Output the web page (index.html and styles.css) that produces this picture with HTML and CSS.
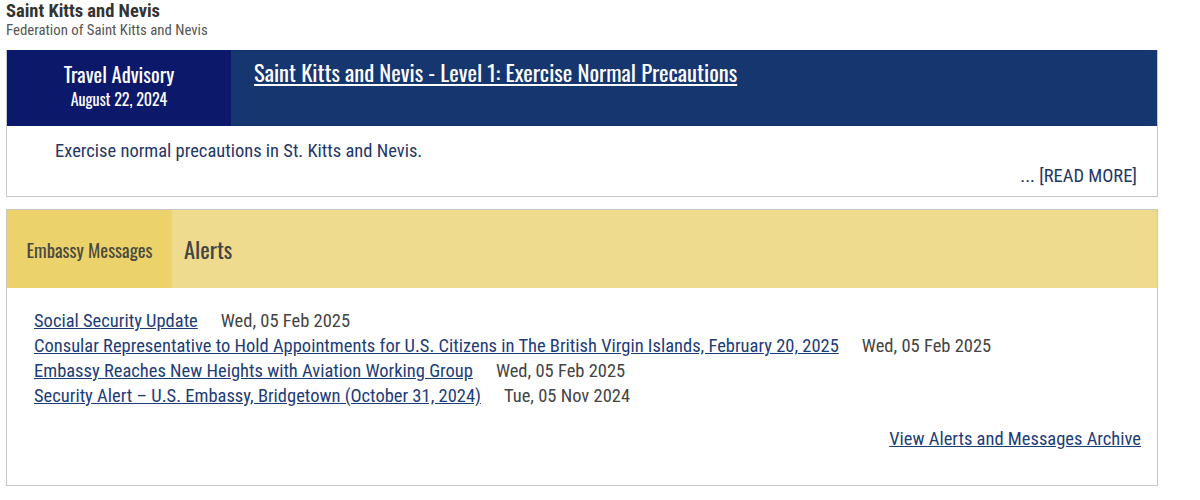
FILE: index.html
```html
<!DOCTYPE html>
<html lang="en">
<head>
    <meta charset="UTF-8">
    <title>Saint Kitts and Nevis</title>
    <link rel="stylesheet" href="styles.css">
</head>
<body>
    <div class="page-head">
        <h2 class="country">Saint Kitts and Nevis</h2>
        <p class="country-sub">Federation of Saint Kitts and Nevis</p>
    </div>

    <div class="advisory">
        <div class="advisory-bar">
            <div class="advisory-label">
                <span class="label-title">Travel Advisory</span>
                <span class="label-date">August 22, 2024</span>
            </div>
            <div class="advisory-title">
                <a href="#">Saint Kitts and Nevis - Level 1: Exercise Normal Precautions</a>
            </div>
        </div>
        <div class="advisory-body">
            <p class="summary">Exercise normal precautions in St. Kitts and Nevis.</p>
            <a class="read-more" href="#">... [READ MORE]</a>
        </div>
    </div>

    <div class="messages">
        <div class="tabs">
            <div class="tab active">Embassy Messages</div>
            <div class="tab-title">Alerts</div>
        </div>
        <div class="messages-body">
            <ul class="alert-list">
                <li><a href="#">Social Security Update</a><span class="date">Wed, 05 Feb 2025</span></li>
                <li><a href="#">Consular Representative to Hold Appointments for U.S. Citizens in The British Virgin Islands, February 20, 2025</a><span class="date">Wed, 05 Feb 2025</span></li>
                <li><a href="#">Embassy Reaches New Heights with Aviation Working Group</a><span class="date">Wed, 05 Feb 2025</span></li>
                <li><a href="#">Security Alert – U.S. Embassy, Bridgetown (October 31, 2024)</a><span class="date">Tue, 05 Nov 2024</span></li>
            </ul>
            <div class="archive">
                <a href="#">View Alerts and Messages Archive</a>
            </div>
        </div>
    </div>
</body>
</html>
```

FILE: styles.css
```css
body {
    margin: 0;
    padding: 0 42px 0 6px;
    font-family: "Roboto Condensed", "Liberation Sans Narrow", Roboto, sans-serif;
    background: #ffffff;
    color: #333;
}

.page-head {
    height: 50px;
}

.country {
    margin: 0;
    font-size: 18.5px;
    font-weight: bold;
    line-height: 22px;
    color: #333;
}

.country-sub {
    margin: 0;
    font-size: 14.8px;
    line-height: 17px;
    color: #555;
}

.advisory {
    border: 1px solid #c8c8c8;
    border-top: none;
}

.advisory-bar {
    display: flex;
    height: 76px;
    background: #16366f;
}

.advisory-label {
    width: 224px;
    background: #0c196a;
    color: #fff;
    display: flex;
    flex-direction: column;
    align-items: center;
    padding-top: 10px;
    box-sizing: border-box;
}

.label-title {
    font-family: "Oswald", "Roboto Condensed", sans-serif;
    font-size: 20.5px;
    line-height: 28px;
}

.label-date {
    font-family: "Oswald", "Roboto Condensed", sans-serif;
    font-size: 16px;
    line-height: 22px;
}

.advisory-title {
    padding: 7px 0 0 23px;
}

.advisory-title a {
    font-family: "Oswald", "Roboto Condensed", sans-serif;
    font-size: 22.6px;
    line-height: 30px;
    color: #fff;
}

.advisory-body {
    height: 70px;
    padding: 0 20px 0 48px;
    display: flex;
    flex-direction: column;
}

.summary {
    margin: 14px 0 0;
    font-size: 18.5px;
    line-height: 22px;
    color: #1f3769;
}

.read-more {
    align-self: flex-end;
    margin-top: 3px;
    font-size: 18.5px;
    line-height: 22px;
    color: #1f3769;
    text-decoration: none;
}

.messages {
    margin-top: 12px;
    border: 1px solid #c8c8c8;
}

.tabs {
    display: flex;
    height: 78px;
    background: #efdb8e;
}

.tab {
    width: 165px;
    display: flex;
    align-items: center;
    justify-content: center;
    background: #ecd26b;
    font-family: "Oswald", "Roboto Condensed", sans-serif;
    font-size: 18.6px;
    color: #4a4a3e;
}

.tab-title {
    display: flex;
    align-items: center;
    padding-left: 12px;
    font-family: "Oswald", "Roboto Condensed", sans-serif;
    font-size: 22.5px;
    color: #444;
}

.messages-body {
    height: 197px;
    padding: 21px 16px 0 27px;
    box-sizing: border-box;
}

.alert-list {
    list-style: none;
    margin: 0;
    padding: 0;
}

.alert-list li {
    font-size: 18.5px;
    line-height: 25px;
}

.alert-list a {
    color: #1d3d78;
}

.date {
    margin-left: 23px;
    color: #444;
}

.archive {
    text-align: right;
    margin-top: 18px;
}

.archive a {
    font-size: 18.5px;
    line-height: 25px;
    color: #1d3d78;
}
```
